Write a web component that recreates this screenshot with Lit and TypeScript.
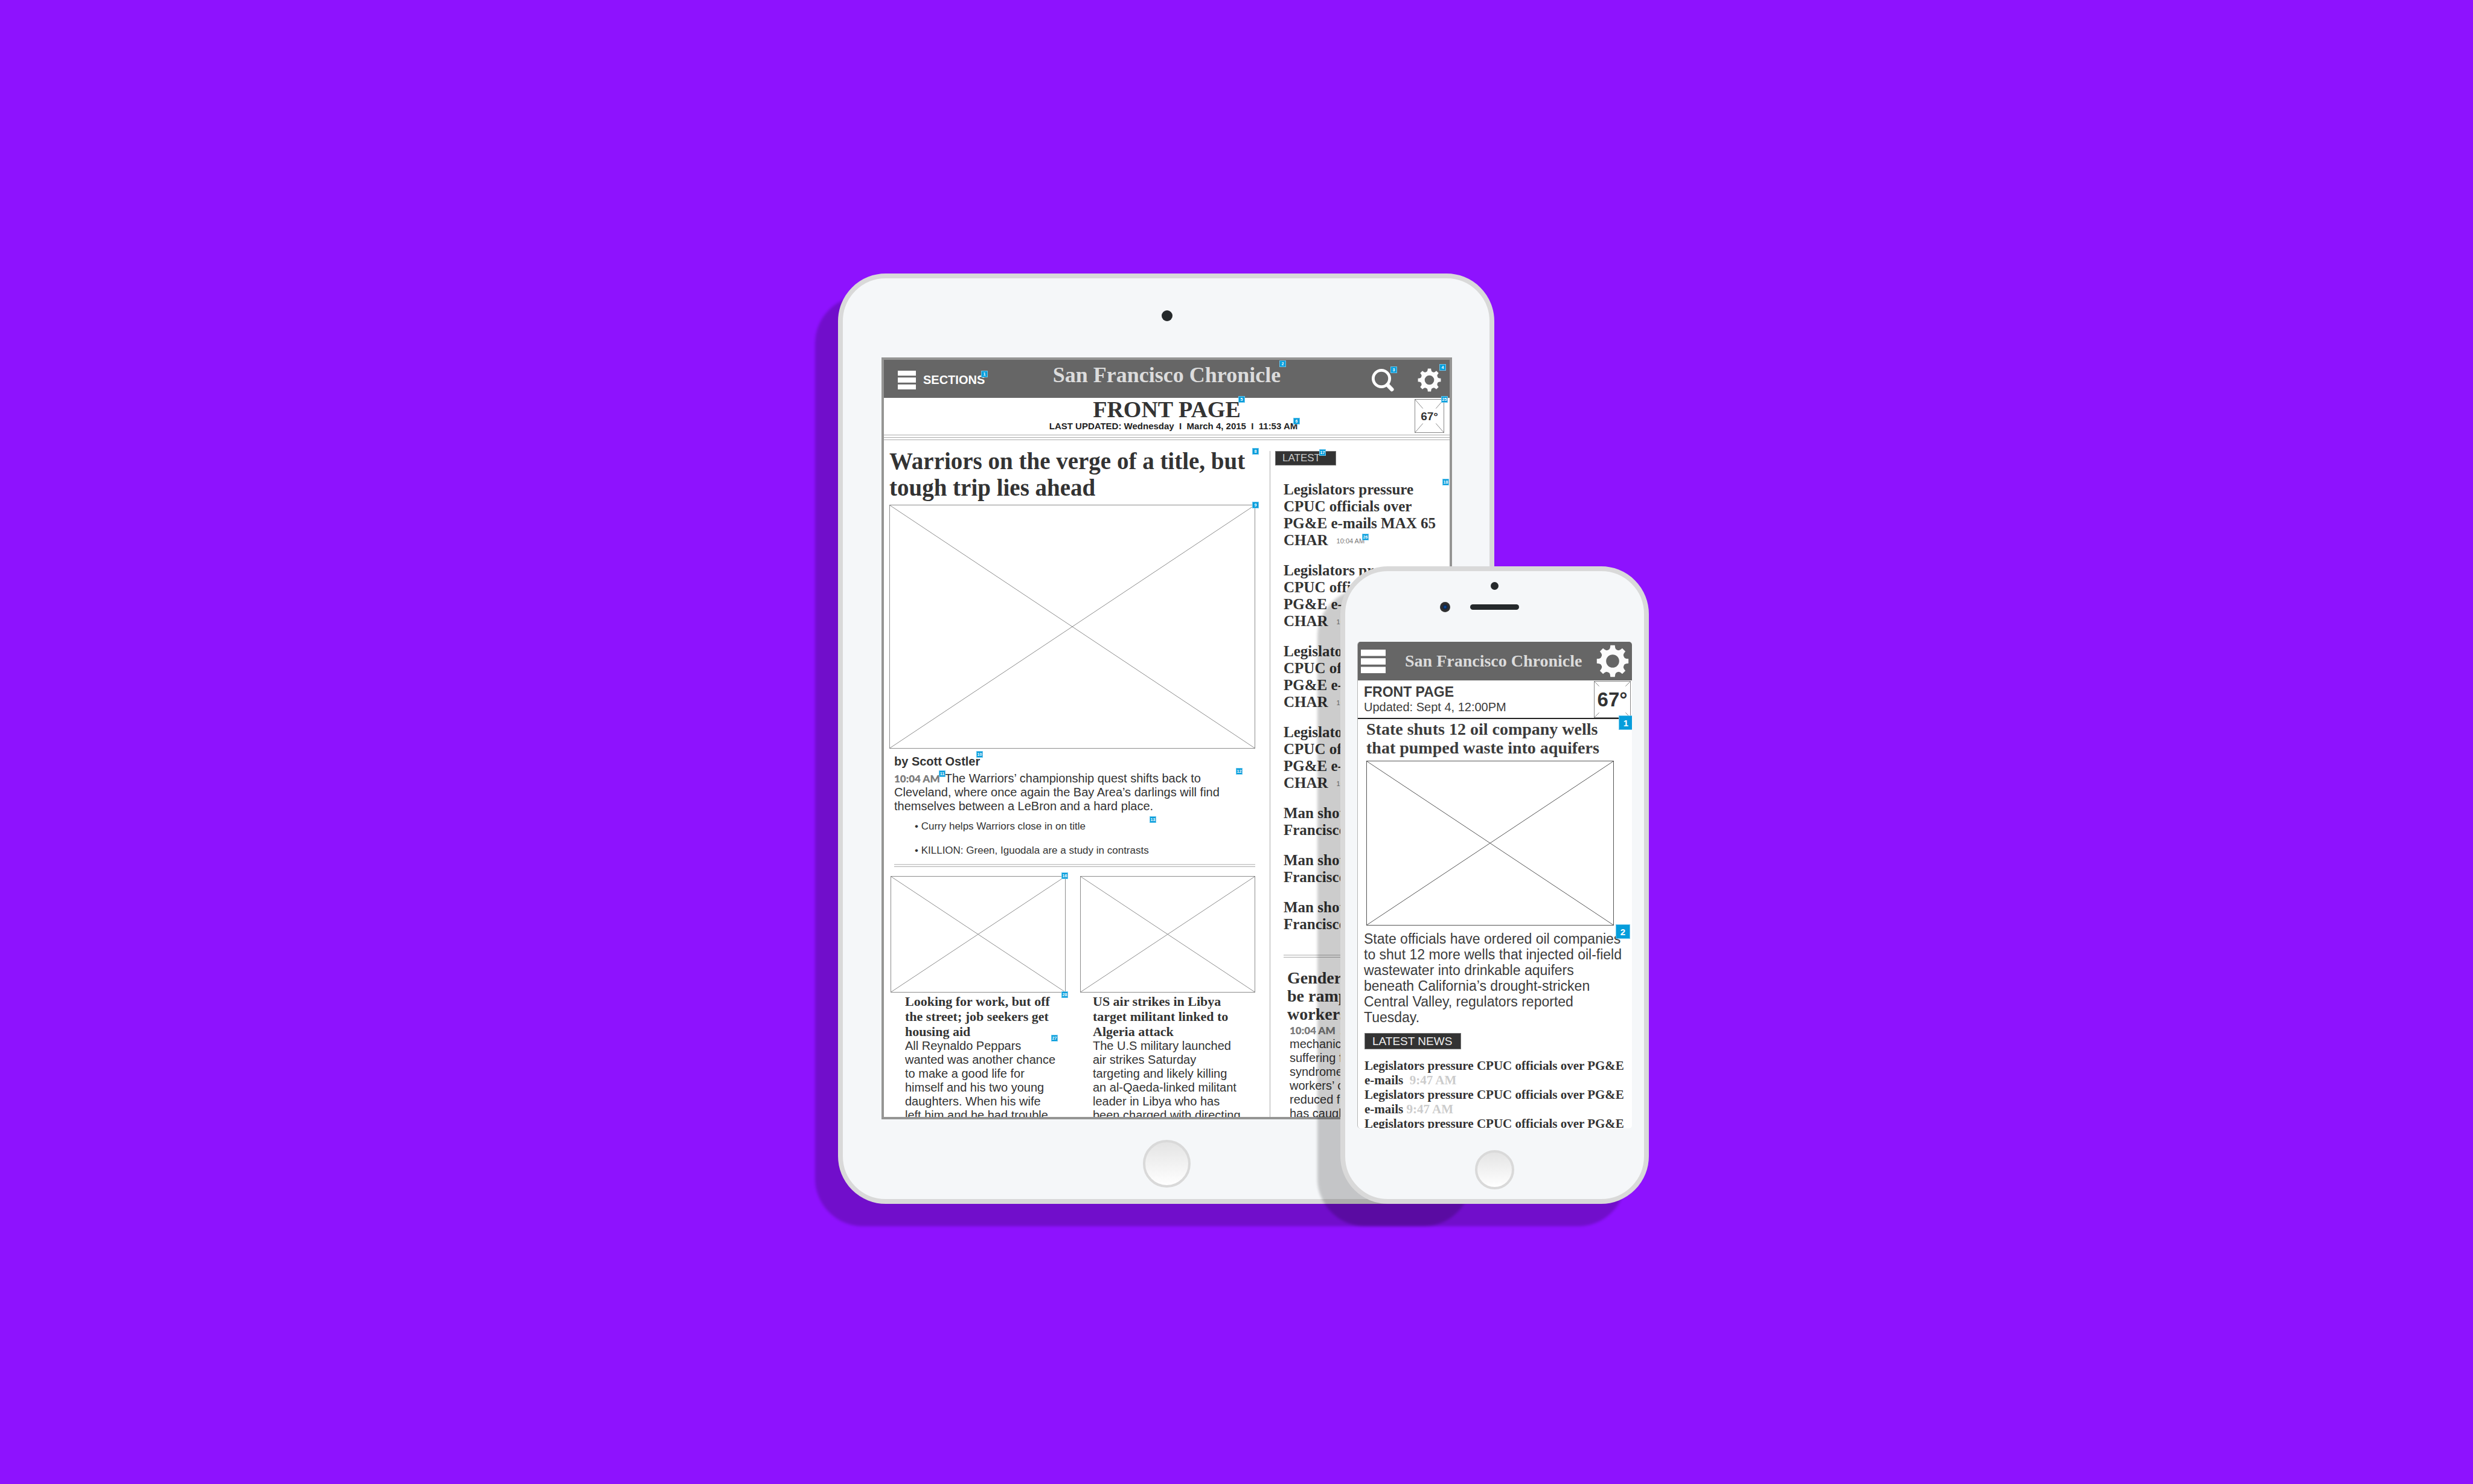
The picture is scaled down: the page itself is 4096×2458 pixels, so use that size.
import { LitElement, html, svg, css } from "lit";
import { customElement, property } from "lit/decorators.js";
import { styleMap } from "lit/directives/style-map.js";

interface Pin {
  n: number;
  x: number;
  y: number;
}

/** Outline of an eight-toothed gear in a 100 x 100 box. */
function gearPath(): string {
  const at = (deg: number, r: number) => {
    const a = (deg * Math.PI) / 180;
    return `${(50 + r * Math.sin(a)).toFixed(2)} ${(50 - r * Math.cos(a)).toFixed(2)}`;
  };
  let d = `M${at(-8, 49)}`;
  for (let i = 0; i < 8; i++) {
    const c = i * 45;
    d += `L${at(c + 8, 49)}Q${at(c + 10, 41)} ${at(c + 15, 38)}Q${at(c + 22, 36)} ${at(c + 30, 38)}`;
    d += `Q${at(c + 35, 41)} ${at(c + 37, 49)}`;
  }
  d += "Z M50 30A20 20 0 1 0 50 70A20 20 0 1 0 50 30Z";
  return d;
}

const GEAR = gearPath();

const gearIcon = html`<svg class="icon" viewBox="0 0 100 100" aria-hidden="true">
  <path d=${GEAR} fill="#fcfcfc" fill-rule="evenodd"></path>
</svg>`;

const menuIcon = html`<svg class="icon" viewBox="0 0 42 39" preserveAspectRatio="none" aria-hidden="true">
  <path d="M0 0H42V10.5H0ZM0 14.2H42V24.8H0ZM0 28.5H42V39H0Z" fill="#fff"></path>
</svg>`;

const searchIcon = html`<svg class="icon" viewBox="0 0 38 39" aria-hidden="true">
  <circle cx="16.5" cy="17" r="13.6" fill="none" stroke="#fff" stroke-width="4.8"></circle>
  <path d="M26.500 27.500L33.800 35" stroke="#fff" stroke-width="6.500" stroke-linecap="round"></path>
</svg>`;

/** Image placeholder: a frame with its two diagonals. */
@customElement("image-frame")
export class ImageFrame extends LitElement {
  static styles = css`
    :host {
      display: block;
      box-sizing: border-box;
      border: 1px solid var(--frame-line, #8c8c8c);
    }
    svg {
      display: block;
      width: 100%;
      height: 100%;
    }
    path {
      stroke: var(--frame-line, #8c8c8c);
    }
  `;

  render() {
    return html`<svg viewBox="0 0 100 100" preserveAspectRatio="none" aria-hidden="true">
      <path d="M0 0L100 100M100 0L0 100" stroke-width="1" vector-effect="non-scaling-stroke"></path>
    </svg>`;
  }
}

/** Temperature tile: corner ticks around a reading. */
@customElement("weather-tile")
export class WeatherTile extends LitElement {
  @property({ type: Number }) reach = 27;

  static styles = css`
    :host {
      display: grid;
      place-items: center;
      box-sizing: border-box;
      border: 1px solid #888;
      background: #fff;
      font-weight: 700;
      line-height: 1;
      color: #333;
    }
    svg,
    span {
      grid-area: 1 / 1;
    }
    svg {
      width: 100%;
      height: 100%;
    }
  `;

  render() {
    const a = this.reach;
    const b = 100 - a;
    return html`<svg viewBox="0 0 100 100" preserveAspectRatio="none" aria-hidden="true">
        ${svg`<path d=${`M0 0L${a} ${a}M100 0L${b} ${a}M0 100L${a} ${b}M100 100L${b} ${b}`}
          stroke="#888" stroke-width="1" vector-effect="non-scaling-stroke"></path>`}
      </svg>
      <span><slot></slot></span>`;
  }
}

/** Numbered annotation markers laid over a wireframe. */
@customElement("pin-layer")
export class PinLayer extends LitElement {
  @property({ attribute: false }) pins: Pin[] = [];

  static styles = css`
    :host {
      position: absolute;
      inset: 0;
      pointer-events: none;
    }
    .pin {
      position: absolute;
      display: grid;
      place-items: center;
      box-sizing: border-box;
      width: var(--pin-size, 11px);
      height: var(--pin-size, 11px);
      border: 1px solid #6cc5ec;
      background: #069ddb;
      color: #fff;
      font: 700 var(--pin-font, 7px) / 1 "Liberation Sans", Arial, sans-serif;
    }
  `;

  render() {
    return this.pins.map(
      (p) => html`<span class="pin" style=${styleMap({ left: `${p.x}px`, top: `${p.y}px` })}>${p.n}</span>`
    );
  }
}

const screenStyles = css`
  * {
    box-sizing: border-box;
  }
  h1,
  h2,
  h3,
  p,
  ul {
    margin: 0;
    padding: 0;
  }
  ul {
    list-style: none;
  }
  button {
    display: flex;
    align-items: center;
    margin: 0;
    padding: 0;
    border: 0;
    background: none;
    color: #fff;
    font: inherit;
  }
  .icon {
    display: block;
    width: 100%;
    height: 100%;
  }
  h1,
  h2,
  h3,
  .serif,
  .logo {
    font-family: "Liberation Serif", "Times New Roman", serif;
    font-weight: 700;
  }
  .logo {
    color: #dcdcdc;
    text-decoration: none;
    white-space: nowrap;
  }
  .tag {
    display: block;
    width: fit-content;
    border: 1px solid #777;
    background: #333;
    font-weight: 400;
    font-family: "Liberation Sans", Arial, sans-serif;
  }
`;

const TABLET_PINS: Pin[] = [
  { n: 1, x: 161, y: 18 },
  { n: 2, x: 655, y: 1 },
  { n: 3, x: 839, y: 11 },
  { n: 4, x: 920, y: 7 },
  { n: 25, x: 923, y: 60 },
  { n: 5, x: 587, y: 60 },
  { n: 6, x: 678, y: 96 },
  { n: 8, x: 610, y: 146 },
  { n: 9, x: 610, y: 235 },
  { n: 17, x: 721, y: 148 },
  { n: 18, x: 925, y: 197 },
  { n: 26, x: 792, y: 288 },
  { n: 10, x: 153, y: 648 },
  { n: 11, x: 91, y: 680 },
  { n: 12, x: 583, y: 676 },
  { n: 13, x: 440, y: 756 },
  { n: 16, x: 294, y: 849 },
  { n: 28, x: 294, y: 1046 },
  { n: 27, x: 277, y: 1118 },
];

@customElement("tablet-screen")
export class TabletScreen extends LitElement {
  static styles = [
    screenStyles,
    css`
      :host {
        display: block;
        position: relative;
        box-sizing: border-box;
        overflow: hidden;
        border: 4px solid #959594;
        background: #fff;
        color: #333;
        font: 400 20px / 23px "Liberation Sans", Arial, sans-serif;
      }
      .bar {
        display: grid;
        grid-template-columns: 1fr auto 1fr;
        align-items: center;
        height: 63px;
        padding: 4px 14px 0;
        background: #666;
      }
      .sections {
        gap: 12px;
        padding-left: 9px;
        font-weight: 700;
      }
      .menu-box {
        width: 30px;
        height: 31px;
      }
      .logo {
        align-self: start;
        font-size: 36px;
        line-height: 42px;
      }
      .tools {
        display: flex;
        justify-content: flex-end;
        gap: 38px;
      }
      .tool {
        width: 39px;
        height: 39px;
      }
      .sub {
        display: grid;
        grid-template-columns: 1fr auto 1fr;
        height: 61px;
        padding: 1px 9px 0;
      }
      .titles {
        grid-column: 2;
        text-align: center;
      }
      .sub h1 {
        font-size: 38px;
        line-height: 37px;
      }
      .updated {
        padding-left: 22px;
        color: #222;
        font-size: 15px;
        font-weight: 700;
        line-height: 18px;
        white-space: pre;
      }
      .sub h1,
      .updated {
        margin: 0 -22px;
      }
      .weather {
        justify-self: end;
        width: 49px;
        height: 56px;
        margin-top: 1px;
        font-size: 19px;
      }
      .rules {
        display: grid;
        gap: 3px;
      }
      .rules i {
        height: 1px;
        background: #aaa;
      }
      .page {
        display: grid;
        grid-template-columns: minmax(0, 639fr) minmax(0, 298fr);
      }
      .main {
        padding: 13px 24px 0 9px;
      }
      .main h2 {
        font-size: 39px;
        line-height: 44px;
      }
      .hero {
        aspect-ratio: 606 / 404;
        margin-top: 6px;
      }
      .story {
        padding-left: 8px;
      }
      .byline {
        margin-top: 9px;
        font-weight: 700;
        line-height: 24px;
      }
      .lead {
        margin-top: 5px;
      }
      .time {
        margin-right: 8px;
        color: #7c7c7c;
        font-family: Lato, sans-serif;
        font-size: 17px;
        font-weight: 800;
        line-height: 1;
      }
      .related {
        margin-top: 2px;
        padding-left: 34px;
        font-size: 17px;
        line-height: 40px;
      }
      .double {
        height: 5px;
        border-top: 2px solid #d4d4d4;
        border-bottom: 1px solid #aaa;
      }
      .story .double {
        margin-top: 2px;
      }
      .cards {
        display: grid;
        grid-template-columns: 1fr 1fr;
        gap: 24px;
        margin-top: 15px;
        padding-left: 2px;
      }
      .card image-frame {
        aspect-ratio: 290 / 193;
      }
      .text {
        padding: 2px 0 0 24px;
        white-space: nowrap;
      }
      .card + .card .text {
        padding-left: 21px;
      }
      .card h3 {
        font-size: 22px;
        line-height: 25px;
      }
      .latest {
        margin-top: 18px;
        padding-left: 8px;
        border-left: 1px solid #aaa;
        white-space: nowrap;
      }
      .latest .tag {
        padding: 0 25px 0 11px;
        color: #ccc;
        font-size: 17px;
        line-height: 22px;
      }
      .headlines {
        display: grid;
        gap: 22px;
        margin: 26px 0 36px;
        padding-left: 14px;
        font-size: 25px;
        line-height: 28px;
      }
      .stamp {
        margin-left: 14px;
        color: #777;
        font: 400 11px / 1 "Liberation Sans", Arial, sans-serif;
        vertical-align: 3px;
      }
      .latest .double {
        margin-left: 14px;
      }
      .feature {
        padding: 19px 0 0 24px;
      }
      .feature h3 {
        margin-left: -4px;
        font-size: 28px;
        line-height: 30px;
      }
    `,
  ];

  render() {
    return html`
      <header class="bar">
        <button class="sections"><span class="menu-box">${menuIcon}</span>SECTIONS</button>
        <a class="logo" href="#">San Francisco Chronicle</a>
        <div class="tools">
          <button class="tool" aria-label="Search">${searchIcon}</button>
          <button class="tool" aria-label="Settings">${gearIcon}</button>
        </div>
      </header>
      <section class="sub">
        <div class="titles">
          <h1>FRONT PAGE</h1>
          <p class="updated">LAST UPDATED: Wednesday  I  March 4, 2015  I  11:53 AM</p>
        </div>
        <weather-tile class="weather">67°</weather-tile>
      </section>
      <div class="rules"><i></i><i></i><i></i></div>
      <div class="page">
        <main class="main">
          <h2>Warriors on the verge of a title, but<br />tough trip lies ahead</h2>
          <image-frame class="hero"></image-frame>
          <div class="story">
            <p class="byline">by Scott Ostler</p>
            <p class="lead">
              <span class="time">10:04 AM</span>The Warriors’ championship quest shifts back to<br />Cleveland, where
              once again the Bay Area’s darlings will find<br />themselves between a LeBron and a hard place.
            </p>
            <ul class="related">
              <li>• Curry helps Warriors close in on title</li>
              <li>• KILLION: Green, Iguodala are a study in contrasts</li>
            </ul>
            <div class="double"></div>
          </div>
          <div class="cards">
            <article class="card">
              <image-frame></image-frame>
              <div class="text">
                <h3>Looking for work, but off<br />the street; job seekers get<br />housing aid</h3>
                <p>
                  All Reynaldo Peppars<br />wanted was another chance<br />to make a good life for<br />himself and his
                  two young<br />daughters. When his wife<br />left him and he had trouble
                </p>
              </div>
            </article>
            <article class="card">
              <image-frame></image-frame>
              <div class="text">
                <h3>US air strikes in Libya<br />target militant linked to<br />Algeria attack</h3>
                <p>
                  The U.S military launched<br />air strikes Saturday<br />targeting and likely killing<br />an
                  al-Qaeda-linked militant<br />leader in Libya who has<br />been charged with directing
                </p>
              </div>
            </article>
          </div>
        </main>
        <aside class="latest">
          <h3 class="tag">LATEST</h3>
          <ul class="headlines serif">
            ${[0, 1, 2, 3].map(
              () => html`<li>
                Legislators pressure<br />CPUC officials over<br />PG&amp;E e-mails MAX 65<br />CHAR<span class="stamp"
                  >10:04 AM</span
                >
              </li>`
            )}
            ${[0, 1, 2].map(() => html`<li>Man shot in San<br />Francisco</li>`)}
          </ul>
          <div class="double"></div>
          <article class="feature">
            <h3>Gender bias may<br />be rampant in<br />workers’ comp</h3>
            <p>
              <span class="time">10:04 AM</span>An auto<br />mechanic who is<br />suffering from<br />syndrome had her<br />workers’
              claim<br />reduced for age<br />has caught on
            </p>
          </article>
        </aside>
      </div>
      <pin-layer .pins=${TABLET_PINS}></pin-layer>
    `;
  }
}

const PHONE_PINS: Pin[] = [
  { n: 1, x: 432, y: 122 },
  { n: 2, x: 427, y: 468 },
];

@customElement("phone-screen")
export class PhoneScreen extends LitElement {
  static styles = [
    screenStyles,
    css`
      :host {
        display: block;
        position: relative;
        box-sizing: border-box;
        overflow: hidden;
        border-left: 1px solid #b4b4b4;
        border-radius: 5px;
        background: #fff;
        color: #3c3c3c;
        font: 400 23px / 26px "Liberation Sans", Arial, sans-serif;
        --pin-size: 24px;
        --pin-font: 15px;
        --frame-line: #555;
      }
      .bar {
        display: flex;
        align-items: center;
        height: 64px;
        padding: 0 5px;
        background: #666;
      }
      .menu {
        width: 41px;
        height: 39px;
      }
      .logo {
        margin: 0 auto 0 32px;
        font-size: 28px;
        line-height: 32px;
      }
      .gear {
        width: 54px;
        height: 54px;
      }
      .sub {
        display: flex;
        justify-content: space-between;
        height: 64px;
        padding: 0 2px 0 10px;
        border-bottom: 2px solid #222;
      }
      .sub h1 {
        padding-top: 6px;
        font: 700 23px / 26px "Liberation Sans", Arial, sans-serif;
      }
      .updated {
        font-size: 20px;
        line-height: 24px;
      }
      .weather {
        width: 61px;
        height: 61px;
        margin-top: 1px;
        font-size: 33px;
      }
      .story {
        padding: 1px 30px 0 14px;
      }
      .story h2 {
        font-size: 28px;
        line-height: 31px;
      }
      .hero {
        aspect-ratio: 410 / 273;
        margin-top: 6px;
      }
      .more {
        padding: 9px 0 0 10px;
        white-space: nowrap;
      }
      .tag {
        margin: 13px 0 15px 1px;
        padding: 0 14px 0 12px;
        color: #eee;
        font-size: 19px;
        line-height: 25px;
      }
      .news {
        padding-left: 1px;
        color: #333;
        font-size: 21px;
        line-height: 24px;
      }
      .stamp {
        color: #ccc;
        white-space: pre;
      }
    `,
  ];

  render() {
    return html`
      <header class="bar">
        <button class="menu" aria-label="Sections">${menuIcon}</button>
        <a class="logo" href="#">San Francisco Chronicle</a>
        <button class="gear" aria-label="Settings">${gearIcon}</button>
      </header>
      <section class="sub">
        <div>
          <h1>FRONT PAGE</h1>
          <p class="updated">Updated: Sept 4, 12:00PM</p>
        </div>
        <weather-tile class="weather" reach="13">67°</weather-tile>
      </section>
      <article class="story">
        <h2>State shuts 12 oil company wells<br />that pumped waste into aquifers</h2>
        <image-frame class="hero"></image-frame>
      </article>
      <section class="more">
        <p>
          State officials have ordered oil companies<br />to shut 12 more wells that injected oil-field<br />wastewater
          into drinkable aquifers<br />beneath California’s drought-stricken<br />Central Valley, regulators reported<br />Tuesday.
        </p>
        <h3 class="tag">LATEST NEWS</h3>
        <ul class="news serif">
          ${["  9:47 AM", " 9:47 AM", " 9:47 AM"].map(
            (t) => html`<li>
              Legislators pressure CPUC officials over PG&amp;E<br />e-mails<span class="stamp">${t}</span>
            </li>`
          )}
        </ul>
      </section>
      <pin-layer .pins=${PHONE_PINS}></pin-layer>
    `;
  }
}

@customElement("app-root")
export class AppRoot extends LitElement {
  static styles = css`
    :host {
      display: block;
    }
    * {
      box-sizing: border-box;
    }
    .stage {
      display: flex;
      align-items: center;
      justify-content: center;
      min-height: 100vh;
      padding: 0 0 11px 23px;
      background: #8e12fe;
    }
    .devices {
      display: flex;
      align-items: flex-end;
    }
    .device {
      display: flex;
      flex-direction: column;
      flex: none;
      isolation: isolate;
      border: 8px solid #d9d9d9;
      border-radius: 79px;
      background: #f5f7f9;
      box-shadow: -38px 37px 4px rgba(0, 0, 0, 0.2);
    }
    .tablet {
      width: min(1087px, 80vw);
      padding: 53px 62px 19px 64px;
    }
    .tablet tablet-screen {
      aspect-ratio: 945 / 1262;
      margin: 60px 0 34px;
    }
    .phone {
      width: min(511px, 80vw);
      margin-left: -255px;
      padding: 18px 20px 16px;
    }
    .phone phone-screen {
      aspect-ratio: 455 / 806;
      margin: 49px 0 36px;
    }
    .dot {
      align-self: center;
      border-radius: 50%;
      background: #25292b;
    }
    .tablet .dot {
      width: 18px;
      height: 18px;
    }
    .phone .dot {
      width: 13px;
      height: 13px;
    }
    .ear {
      display: grid;
      grid-template-columns: 1fr auto 1fr;
      align-items: center;
      gap: 33px;
      margin-top: 20px;
    }
    .camera {
      justify-self: end;
      width: 17px;
      height: 17px;
      border-radius: 50%;
      background: radial-gradient(circle closest-side, #0a4a94 0 15%, #0a2450 35%, #2a2c2e 50%, #333 100%);
    }
    .speaker {
      width: 81px;
      height: 9px;
      border-radius: 5px;
      background: #25292b;
    }
    .home {
      align-self: center;
      padding: 0;
      border: 4px solid #d9d9d9;
      border-radius: 50%;
      background: linear-gradient(#e4e4e4, #fff);
    }
    .tablet .home {
      width: 79px;
      height: 79px;
    }
    .phone .home {
      width: 65px;
      height: 65px;
    }
  `;

  render() {
    return html`<div class="stage">
      <div class="devices">
        <div class="device tablet">
          <span class="dot"></span>
          <tablet-screen></tablet-screen>
          <button class="home" aria-label="Home"></button>
        </div>
        <div class="device phone">
          <span class="dot"></span>
          <div class="ear"><span class="camera"></span><span class="speaker"></span></div>
          <phone-screen></phone-screen>
          <button class="home" aria-label="Home"></button>
        </div>
      </div>
    </div>`;
  }
}
